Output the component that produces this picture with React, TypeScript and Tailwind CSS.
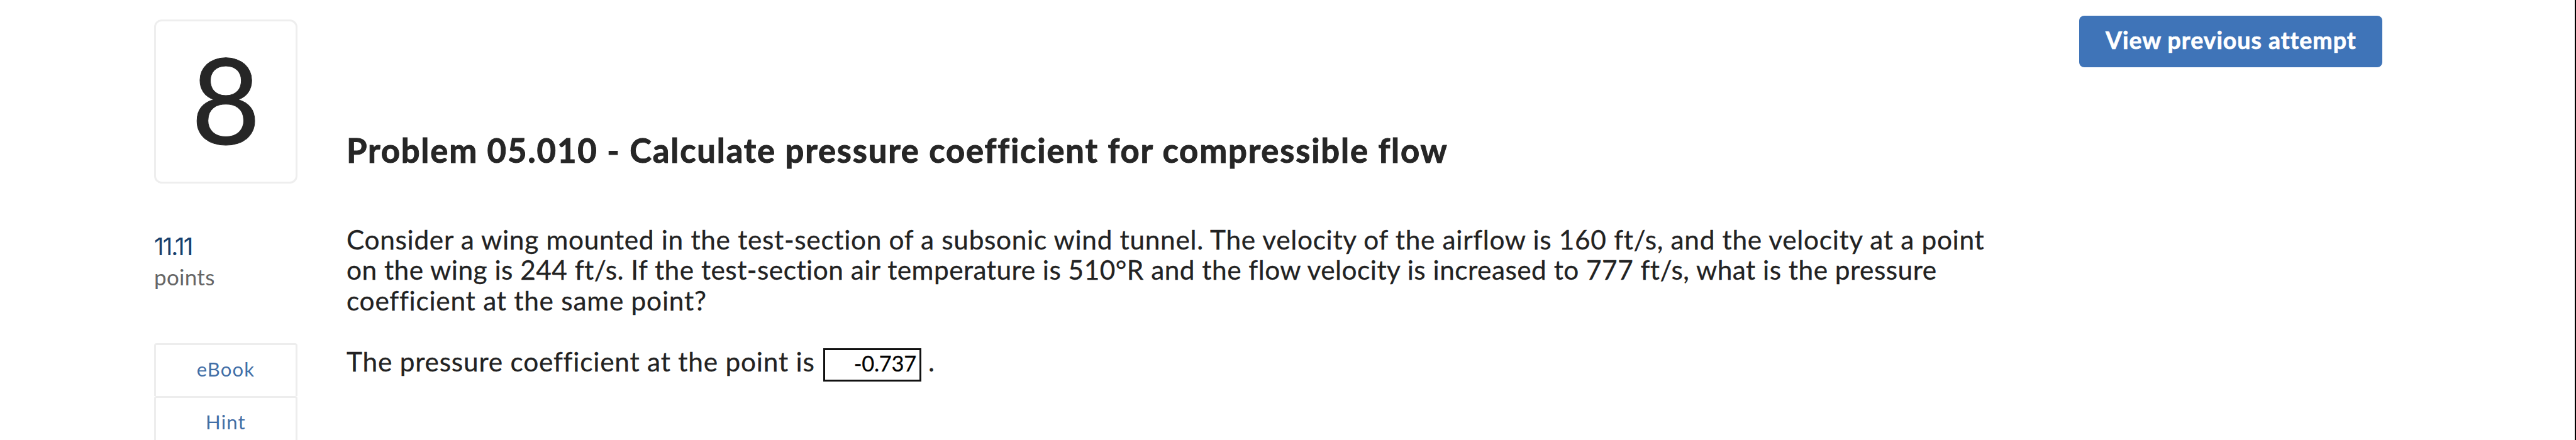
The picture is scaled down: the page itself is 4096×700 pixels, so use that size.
import React from 'react';

const problemLines = [
  {
    text: 'Consider a wing mounted in the test-section of a subsonic wind tunnel. The velocity of the airflow is 160 ft/s, and the velocity at a point',
    tracking: 'tracking-[0.67px]',
  },
  {
    text: 'on the wing is 244 ft/s. If the test-section air temperature is 510°R and the flow velocity is increased to 777 ft/s, what is the pressure',
    tracking: 'tracking-[0.47px]',
  },
  {
    text: 'coefficient at the same point?',
    tracking: 'tracking-[0.75px]',
  },
];

const resources = ['eBook', 'Hint'];

const Sidebar: React.FC = () => (
  <aside className="w-[228px] shrink-0 pt-[31px]">
    <div className="h-[261px] rounded-[12px] border-[3px] border-[#eeeeee] text-center text-[190px] leading-[242px] text-[#262626] [-webkit-text-stroke:1px_#262626]">
      8
    </div>

    <div className="mt-[76px] h-12 font-['Inter',sans-serif] text-[38.5px] leading-[48px] tracking-[-2px] text-[#173f6e]">
      11.11
    </div>
    <div className="h-12 text-[35px] leading-[48px] tracking-[0.3px] text-[#666666]">points</div>

    <div className="mt-[82px]">
      {resources.map((label) => (
        <a
          key={label}
          className="block h-[83.6px] rounded-t-[4px] border-x-[3px] border-t-[3px] border-[#ededed] text-center text-[31px] leading-[77px] tracking-[1.2px] text-[#416ea6]"
        >
          {label}
        </a>
      ))}
    </div>
  </aside>
);

const Problem: React.FC = () => (
  <main className="ml-[78px] w-[2755px] shrink-0 whitespace-nowrap pt-[209px] text-[42.4px] leading-[48.7px] text-[#222222] [-webkit-text-stroke:0.3px_#222222]">
    <h1 className="h-[60px] text-[52.6px] font-bold leading-[60px] tracking-[1.82px] text-[#262626] [-webkit-text-stroke:1px_#262626]">
      Problem 05.010 - Calculate pressure coefficient for compressible flow
    </h1>

    <div className="mt-[87.5px]">
      {problemLines.map((line) => (
        <p key={line.text} className={line.tracking}>
          {line.text}
        </p>
      ))}
    </div>

    <div className="mt-[48.7px] flex items-start">
      <span className="w-[758px] tracking-[0.78px]">The pressure coefficient at the point is</span>
      <div className="mt-[3px] h-[53px] w-[156px] border-[3px] border-[#111111] pr-[5px] text-right text-[34.5px] leading-[42px] tracking-[-0.3px] text-black">
        -0.737
      </div>
      <span className="ml-[11px]">.</span>
    </div>
  </main>
);

const App: React.FC = () => {
  return (
    <div className="flex h-[700px] w-[4096px] overflow-hidden border-r-2 border-black bg-white pl-[245px] font-['Lato',sans-serif]">
      <Sidebar />
      <Problem />
      <button className="mt-[25px] h-[82px] w-[482px] shrink-0 whitespace-nowrap rounded-lg bg-[#3f74b8] pl-[42px] text-left text-[37.5px] font-bold leading-[77px] tracking-[0.95px] text-white [-webkit-text-stroke:0.7px_white]">
        <span className="block h-[82px]">View previous attempt</span>
      </button>
    </div>
  );
};

export default App;
